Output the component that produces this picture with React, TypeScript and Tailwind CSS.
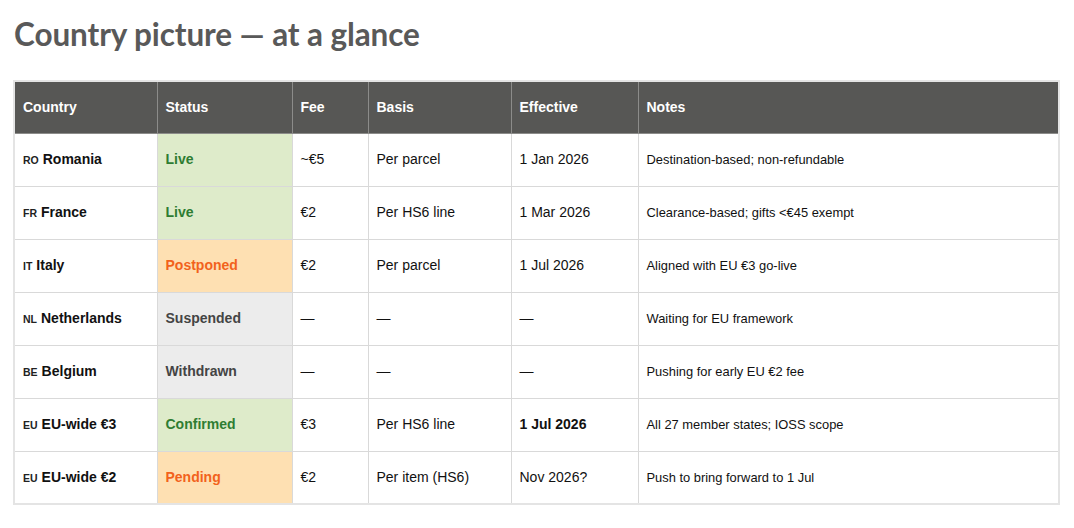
import React from "react";

type Row = {
  code: string;
  name: string;
  status: string;
  tone: "green" | "orange" | "gray";
  fee: string;
  basis: string;
  effective: string;
  boldEffective?: boolean;
  notes: string;
};

const rows: Row[] = [
  { code: "RO", name: "Romania", status: "Live", tone: "green", fee: "~€5", basis: "Per parcel", effective: "1 Jan 2026", notes: "Destination-based; non-refundable" },
  { code: "FR", name: "France", status: "Live", tone: "green", fee: "€2", basis: "Per HS6 line", effective: "1 Mar 2026", notes: "Clearance-based; gifts <€45 exempt" },
  { code: "IT", name: "Italy", status: "Postponed", tone: "orange", fee: "€2", basis: "Per parcel", effective: "1 Jul 2026", notes: "Aligned with EU €3 go-live" },
  { code: "NL", name: "Netherlands", status: "Suspended", tone: "gray", fee: "—", basis: "—", effective: "—", notes: "Waiting for EU framework" },
  { code: "BE", name: "Belgium", status: "Withdrawn", tone: "gray", fee: "—", basis: "—", effective: "—", notes: "Pushing for early EU €2 fee" },
  { code: "EU", name: "EU-wide €3", status: "Confirmed", tone: "green", fee: "€3", basis: "Per HS6 line", effective: "1 Jul 2026", boldEffective: true, notes: "All 27 member states; IOSS scope" },
  { code: "EU", name: "EU-wide €2", status: "Pending", tone: "orange", fee: "€2", basis: "Per item (HS6)", effective: "Nov 2026?", notes: "Push to bring forward to 1 Jul" },
];

const toneCls: Record<Row["tone"], string> = {
  green: "bg-[#deebca] text-[#2e7d32]",
  orange: "bg-[#fee0b2] text-[#f2621c]",
  gray: "bg-[#ececec] text-[#444444]",
};

const td = "border border-[#d9d9d9] px-[8px] h-[53px] align-middle";
const th = "border border-[#8c8c8a] px-[8px] h-[52px] align-middle text-left font-bold text-[14px] text-white";

export default function App() {
  return (
    <div className="bg-white w-[1074px] h-[528px] px-[14px] pt-[14px]" style={{ fontFamily: '"Liberation Sans", Arial, sans-serif' }}>
      <h1 className="text-[31.5px] leading-[40px] font-bold text-[#595959] tracking-[-0.1px]" style={{ fontFamily: 'Lato, "Open Sans", sans-serif' }}>
        Country picture — at a glance
      </h1>
      <table className="mt-[26px] -ml-[1px] w-[1047px] border-collapse border-2 border-[#e4e4e4] table-fixed text-[14px] text-[#111111]">
        <colgroup>
          <col className="w-[143px]" />
          <col className="w-[135px]" />
          <col className="w-[76px]" />
          <col className="w-[143px]" />
          <col className="w-[127px]" />
          <col />
        </colgroup>
        <thead>
          <tr className="bg-[#575755]">
            <th className={th}>Country</th>
            <th className={th}>Status</th>
            <th className={th}>Fee</th>
            <th className={th}>Basis</th>
            <th className={th}>Effective</th>
            <th className={th}>Notes</th>
          </tr>
        </thead>
        <tbody>
          {rows.map((r, i) => (
            <tr key={i}>
              <td className={td}>
                <span className="text-[10.5px] font-bold text-[#222222] mr-[4px]">{r.code}</span>
                <span className="font-bold text-[#111111]">{r.name}</span>
              </td>
              <td className={`${td} font-bold ${toneCls[r.tone]}`}>{r.status}</td>
              <td className={td}>{r.fee}</td>
              <td className={td}>{r.basis}</td>
              <td className={`${td} ${r.boldEffective ? "font-bold" : ""}`}>{r.effective}</td>
              <td className={`${td} text-[12.9px]`}>{r.notes}</td>
            </tr>
          ))}
        </tbody>
      </table>
    </div>
  );
}
